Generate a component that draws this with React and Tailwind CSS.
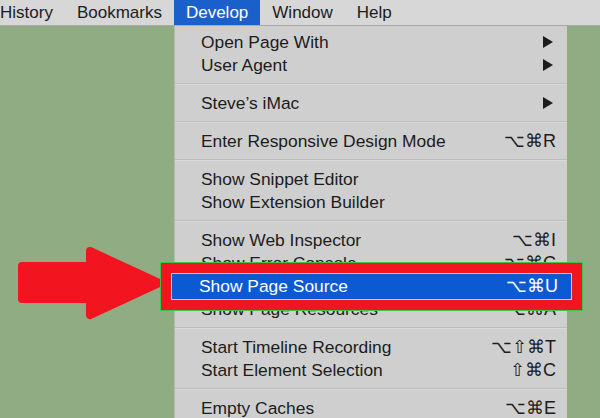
const MENU = [
  { label: 'Open Page With', sub: true },
  { label: 'User Agent', sub: true },
  { sep: true },
  { label: 'Steve’s iMac', sub: true },
  { sep: true },
  { label: 'Enter Responsive Design Mode', key: '⌥⌘R' },
  { sep: true },
  { label: 'Show Snippet Editor' },
  { label: 'Show Extension Builder' },
  { sep: true },
  { label: 'Show Web Inspector', key: '⌥⌘I' },
  { label: 'Show Error Console', key: '⌥⌘C' },
  { label: 'Show Page Source', key: '⌥⌘U' },
  { label: 'Show Page Resources', key: '⌥⌘A' },
  { sep: true },
  { label: 'Start Timeline Recording', key: '⌥⇧⌘T' },
  { label: 'Start Element Selection', key: '⇧⌘C' },
  { sep: true },
  { label: 'Empty Caches', key: '⌥⌘E' },
];

const BAR = ['History', 'Bookmarks', 'Develop', 'Window', 'Help'];

function Arrow() {
  return (
    <svg width="600" height="418" className="absolute left-0 top-0 pointer-events-none">
      <polygon
        points="22,266 90,266 90,251 159,283 90,315 90,299 22,299"
        fill="#f2141f"
        stroke="#f2141f"
        strokeWidth="8"
        strokeLinejoin="round"
      />
    </svg>
  );
}

export default function App() {
  return (
    <div
      className="relative w-[600px] h-[418px] overflow-hidden bg-[#8fac83] text-[#1c1c1c]"
      style={{ fontFamily: '"Liberation Sans", Arial, sans-serif' }}
    >
      {/* menu bar */}
      <div className="flex h-[26px] bg-[#d7d7d7] border-b border-[#a9a9a9] text-[17px]">
        {BAR.map((item, i) => (
          <div
            key={item}
            className={`flex items-center px-3 h-[25px] ${i === 0 ? 'ml-[-12px]' : ''} ${
              item === 'Develop' ? 'bg-[#1b5fcb] text-white' : ''
            }`}
          >
            {item}
          </div>
        ))}
      </div>

      {/* develop menu */}
      <div className="ml-[174px] w-[393px] bg-[#cfcfcf] border-l border-[#b5b5b5] pt-[4.5px] text-[17.4px]">
        {MENU.map((row, i) =>
          row.sep ? (
            <div key={i} className="h-[15px] flex items-center">
              <div className="w-full h-[2px] bg-[#bcbcbc] border-b border-[#dadada]" />
            </div>
          ) : (
            <div key={i} className="h-[23px] flex items-center justify-between pl-[26px] pr-[11px]">
              <span>{row.label}</span>
              {row.sub && (
                <svg width="10" height="12" viewBox="0 0 10 12" className="mr-[3px]">
                  <polygon points="0,0 10,6 0,12" fill="#1c1c1c" />
                </svg>
              )}
              {row.key && <span className="text-[18px]">{row.key}</span>}
            </div>
          )
        )}
      </div>

      {/* annotation */}
      <Arrow />
      <div className="absolute left-[160px] top-[262px] w-[423px] h-[49px] bg-[#f2141f] border border-[#3fc24a] p-[10px]">
        <div className="h-[27px] bg-[#0c5ad3] border border-[#a9d7f0] flex items-center justify-between pl-[27px] pr-[13px] text-white text-[17.4px]">
          <span>Show Page Source</span>
          <span className="text-[18px]">⌥⌘U</span>
        </div>
      </div>
    </div>
  );
}
